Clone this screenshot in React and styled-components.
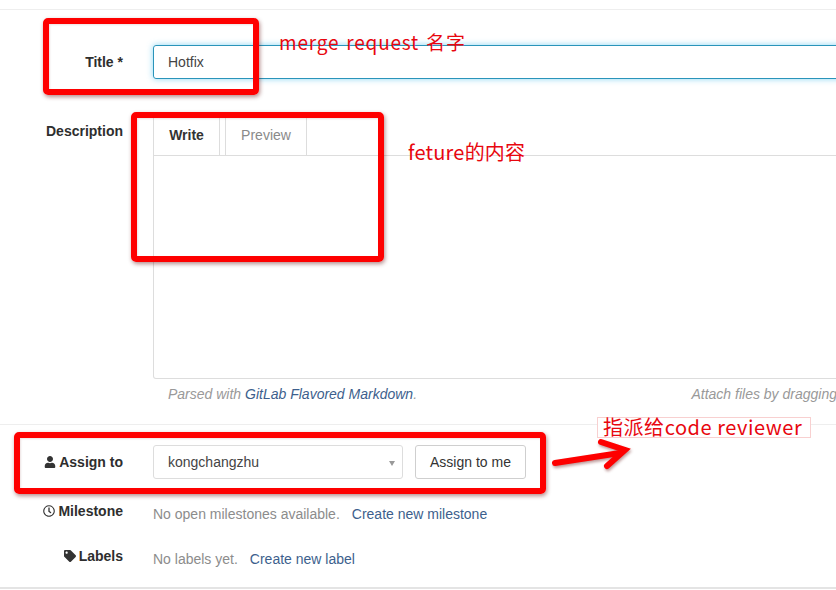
import React from 'react';
import styled, { createGlobalStyle } from 'styled-components';
import { FaUser, FaRegClock, FaTag } from 'react-icons/fa';

const GlobalStyle = createGlobalStyle`
  html, body {
    margin: 0;
    padding: 0;
    background: #fff;
  }
  body {
    font-family: "Liberation Sans", Arial, sans-serif;
    font-size: 14px;
    color: #333;
  }
`;

const Page = styled.div`
  position: relative;
  width: 836px;
  height: 590px;
  overflow: hidden;
  padding-top: 9px;
  box-sizing: border-box;
`;

const Rule = styled.div`
  height: 1px;
  background: ${({ $strong }) => ($strong ? '#e4e4e4' : '#eeeeee')};
`;

const Row = styled.div`
  display: grid;
  grid-template-columns: 123px 1fr;
  column-gap: 30px;
  width: 1038px;
  align-items: ${({ $top }) => ($top ? 'start' : 'center')};
`;

const Label = styled.label`
  display: flex;
  justify-content: flex-end;
  align-items: center;
  gap: 3px;
  font-weight: bold;
  font-size: 14px;
  line-height: 18px;
  color: #2e2e2e;
  svg {
    font-size: 12px;
    color: #333;
  }
`;

const TitleRow = styled(Row)`
  margin-top: 35px;
`;

const TitleInput = styled.div`
  box-sizing: border-box;
  height: 34px;
  padding: 0 14px;
  display: flex;
  align-items: center;
  border: 1px solid #2a94ba;
  border-radius: 3px;
  box-shadow: 0 0 6px rgba(102, 200, 239, 0.75);
  color: #444;
`;

const DescriptionRow = styled(Row)`
  margin-top: 34px;
`;

const DescriptionLabel = styled(Label)`
  padding-top: 9px;
`;

const Editor = styled.div`
  box-sizing: border-box;
  width: 885px;
  height: 266px;
  border: 1px solid #dddddd;
  border-top: 0;
  border-radius: 0 0 3px 3px;
`;

const Tabs = styled.div`
  display: flex;
  height: 43px;
  box-sizing: border-box;
  border-bottom: 1px solid #dddddd;
  margin-left: -1px;
`;

const Tab = styled.div`
  box-sizing: border-box;
  width: ${({ $active }) => ($active ? '67px' : '82px')};
  margin-left: ${({ $active }) => ($active ? '0' : '5px')};
  padding-top: 2px;
  display: flex;
  align-items: center;
  justify-content: center;
  border-left: 1px solid #dddddd;
  border-right: 1px solid #dddddd;
  font-weight: ${({ $active }) => ($active ? 'bold' : 'normal')};
  color: ${({ $active }) => ($active ? '#333' : '#8a8a8a')};
`;

const HintRow = styled.div`
  display: flex;
  justify-content: space-between;
  width: 885px;
  box-sizing: border-box;
  padding: 0 15px;
  margin: 6px 0 0 153px;
  line-height: 18px;
  font-style: italic;
  color: #999;
  white-space: nowrap;
`;

const Link = styled.a`
  color: #3d5f8d;
  text-decoration: none;
`;

const SectionRule = styled(Rule)`
  margin-top: 21px;
`;

const AssignRow = styled(Row)`
  margin-top: 20px;
`;

const Controls = styled.div`
  display: flex;
  gap: 12px;
`;

const Select = styled.div`
  box-sizing: border-box;
  position: relative;
  width: 250px;
  height: 34px;
  padding: 0 14px;
  display: flex;
  align-items: center;
  border: 1px solid #dddddd;
  border-radius: 3px;
  color: #444;
`;

const Caret = styled.span`
  position: absolute;
  right: 7px;
  top: 15px;
  border-style: solid;
  border-width: 5px 3px 0;
  border-color: #999 transparent transparent;
`;

const Button = styled.button`
  box-sizing: border-box;
  width: 111px;
  height: 34px;
  padding: 0;
  background: #fff;
  border: 1px solid #cfcfcf;
  border-radius: 3px;
  font: inherit;
  color: #333;
`;

const MetaRow = styled(Row)`
  margin-top: ${({ $gap }) => $gap}px;
  align-items: start;
`;

const MetaText = styled.div`
  padding-top: 3px;
  line-height: 18px;
  color: #8c8c8c;
  ${Link} {
    margin-left: 12px;
  }
`;

const BottomRule = styled(Rule)`
  margin-top: 19px;
  height: 2px;
`;

const RedBox = styled.div`
  position: absolute;
  box-sizing: border-box;
  border: 6px solid #fe0000;
  border-radius: 5px;
  box-shadow: 1px 2px 4px rgba(90, 0, 0, 0.45), inset 1px 1px 2px rgba(90, 0, 0, 0.12);
`;

const TitleMark = styled(RedBox)`
  left: 43px;
  top: 18px;
  width: 216px;
  height: 77px;
`;

const DescriptionMark = styled(RedBox)`
  left: 131px;
  top: 112px;
  width: 253px;
  height: 150px;
`;

const AssignMark = styled(RedBox)`
  left: 14px;
  top: 432px;
  width: 532px;
  height: 62px;
`;

const Note = styled.span`
  position: absolute;
  font-family: "Noto Sans CJK SC", "Liberation Sans", sans-serif;
  color: #e8070f;
  white-space: nowrap;
  line-height: 24px;
`;

const TitleNote = styled(Note)`
  left: 279px;
  top: 30px;
  font-size: 19px;
  letter-spacing: 0.8px;
  word-spacing: 2px;
`;

const FetureNote = styled(Note)`
  left: 408px;
  top: 140px;
  font-size: 20px;
  letter-spacing: 0.2px;
`;

const ReviewerNote = styled(Note)`
  left: 597px;
  top: 417px;
  box-sizing: border-box;
  width: 214px;
  height: 21px;
  padding-left: 5px;
  border: 1px solid #f8d0d0;
  background: #fff;
  font-size: 20px;
  line-height: 18px;
  letter-spacing: 0.55px;
`;

const Arrow = styled.svg`
  position: absolute;
  left: 548px;
  top: 436px;
  overflow: visible;
  filter: drop-shadow(1px 2px 1.5px rgba(90, 0, 0, 0.4));
`;

const App = () => {
  return (
    <>
      <GlobalStyle />
      <Page>
        <Rule />
        <TitleRow>
          <Label>Title *</Label>
          <TitleInput>Hotfix</TitleInput>
        </TitleRow>
        <DescriptionRow $top>
          <DescriptionLabel>Description</DescriptionLabel>
          <Editor>
            <Tabs>
              <Tab $active>Write</Tab>
              <Tab>Preview</Tab>
            </Tabs>
          </Editor>
        </DescriptionRow>
        <HintRow>
          <span>Parsed with <Link>GitLab Flavored Markdown</Link>.</span>
          <span>Attach files by dragging &amp; dropping or selecting them.</span>
        </HintRow>
        <SectionRule />
        <AssignRow>
          <Label><FaUser />Assign to</Label>
          <Controls>
            <Select>kongchangzhu<Caret /></Select>
            <Button>Assign to me</Button>
          </Controls>
        </AssignRow>
        <MetaRow $gap={23}>
          <Label><FaRegClock />Milestone</Label>
          <MetaText>No open milestones available.<Link>Create new milestone</Link></MetaText>
        </MetaRow>
        <MetaRow $gap={24}>
          <Label><FaTag />Labels</Label>
          <MetaText>No labels yet.<Link>Create new label</Link></MetaText>
        </MetaRow>
        <BottomRule $strong />

        <TitleMark />
        <DescriptionMark />
        <AssignMark />
        <TitleNote>merge request 名字</TitleNote>
        <FetureNote>feture的内容</FetureNote>
        <ReviewerNote>指派给code reviewer</ReviewerNote>
        <Arrow width="84" height="36" viewBox="0 0 84 36">
          <path d="M7 27 L72 17" stroke="#fe0000" strokeWidth="6" strokeLinecap="round" fill="none" />
          <path d="M53 6 L77 14 L59 30" stroke="#fe0000" strokeWidth="6" strokeLinecap="round" strokeLinejoin="miter" fill="none" />
        </Arrow>
      </Page>
    </>
  );
};

export default App;
